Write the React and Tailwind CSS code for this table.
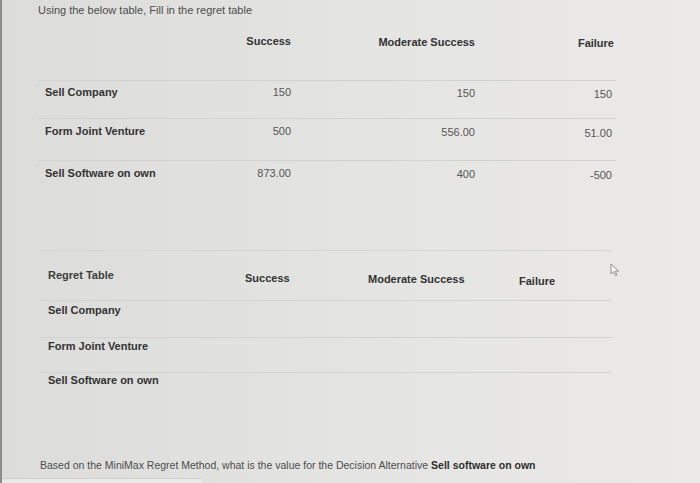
const payoff = [
  { name: "Sell Company", vals: ["150", "150", "150"], h: "h-[38px]", pt: "pt-[4px]", line: true },
  { name: "Form Joint Venture", vals: ["500", "556.00", "51.00"], h: "h-[42px]", pt: "pt-[5px]", line: true },
  { name: "Sell Software on own", vals: ["873.00", "400", "-500"], h: "h-[40px]", pt: "pt-[5px]", line: false },
];

const regret = [
  { name: "Sell Company", h: "h-[37px]", pt: "pt-[2px]", line: true },
  { name: "Form Joint Venture", h: "h-[35px]", pt: "pt-[1px]", line: true },
  { name: "Sell Software on own", h: "h-[30px]", pt: "pt-0", line: false },
];

const payoffCols = "grid grid-cols-[162px_95px_184px_137px]";
const regretCols = "grid grid-cols-[202px_123px_151px_96px]";

function Cursor() {
  return (
    <svg className="absolute left-[608px] top-[263px]" width="10" height="14" viewBox="0 0 10 14">
      <path d="M1 1 L1 11 L3.6 8.6 L5.4 12.6 L6.9 12 L5.2 8.1 L8.6 8.1 Z" fill="#f4f4f2" stroke="#8a8a8a" strokeWidth="0.9" strokeLinejoin="round" />
    </svg>
  );
}

export default function App() {
  return (
    <div
      className="relative w-[700px] h-[483px] overflow-hidden border-l-2 border-[#8c8c8a] bg-gradient-to-r from-[#dcdcda] via-[#e4e4e2] to-[#ebeae8] text-[11px] leading-[14px]"
      style={{ fontFamily: '"Liberation Sans", Arial, sans-serif' }}
    >
      <div className="pl-[36px] pt-[3px] text-[#4d4d4d]">Using the below table, Fill in the regret table</div>

      {/* payoff table */}
      <div className="ml-[36px] w-[578px]">
        <div className={`${payoffCols} h-[64px] pt-[18px] border-b border-[#d2d2d0] font-bold text-[#333]`}>
          <div />
          <div className="text-right pr-[4px] -mt-[1px]">Success</div>
          <div className="text-right pr-[4px]">Moderate Success</div>
          <div className="text-right pr-[2px] mt-[1px]">Failure</div>
        </div>
        {payoff.map((r) => (
          <div
            key={r.name}
            className={`${payoffCols} ${r.h} ${r.pt} ${r.line ? "border-b border-[#d2d2d0]" : ""}`}
          >
            <div className="pl-[7px] font-bold text-[#333]">{r.name}</div>
            <div className="text-right pr-[4px] text-[#555]">{r.vals[0]}</div>
            <div className="text-right pr-[4px] text-[#555] mt-[1px]">{r.vals[1]}</div>
            <div className="text-right pr-[4px] text-[#555] mt-[2px]">{r.vals[2]}</div>
          </div>
        ))}
      </div>

      {/* regret table */}
      <div className="ml-[38px] mt-[49px] w-[572px] border-t border-[#d6d6d4]">
        <div className={`${regretCols} h-[50px] pt-[20px] border-b border-[#d2d2d0] font-bold text-[#333]`}>
          <div className="pl-[8px] -mt-[3px] text-[#3d3d3d]">Regret Table</div>
          <div className="pl-[3px]">Success</div>
          <div className="pl-[3px] mt-[1px]">Moderate Success</div>
          <div className="pl-[3px] mt-[3px]">Failure</div>
        </div>
        {regret.map((r) => (
          <div
            key={r.name}
            className={`${regretCols} ${r.h} ${r.pt} ${r.line ? "border-b border-[#d2d2d0]" : ""}`}
          >
            <div className="pl-[8px] font-bold text-[#333]">{r.name}</div>
            <div />
            <div />
            <div />
          </div>
        ))}
      </div>

      <div className="pl-[38px] mt-[55px] text-[10.5px] text-[#4d4d4d]">
        Based on the MiniMax Regret Method, what is the value for the Decision Alternative{" "}
        <span className="font-bold text-[#2e2e2e]">Sell software on own</span>
      </div>

      <div className="absolute left-0 bottom-0 w-[200px] h-[5px] border-t border-[#cfcfcd] bg-[#e9e9e7]" />
      <Cursor />
    </div>
  );
}
